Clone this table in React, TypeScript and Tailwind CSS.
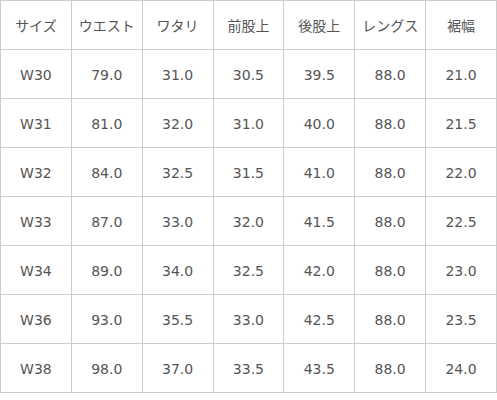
const headers = ['サイズ', 'ウエスト', 'ワタリ', '前股上', '後股上', 'レングス', '裾幅']

const rows = [
  ['W30', '79.0', '31.0', '30.5', '39.5', '88.0', '21.0'],
  ['W31', '81.0', '32.0', '31.0', '40.0', '88.0', '21.5'],
  ['W32', '84.0', '32.5', '31.5', '41.0', '88.0', '22.0'],
  ['W33', '87.0', '33.0', '32.0', '41.5', '88.0', '22.5'],
  ['W34', '89.0', '34.0', '32.5', '42.0', '88.0', '23.0'],
  ['W36', '93.0', '35.5', '33.0', '42.5', '88.0', '23.5'],
  ['W38', '98.0', '37.0', '33.5', '43.5', '88.0', '24.0'],
]

export default function App() {
  return (
    <div className="bg-white">
      <table className="w-[497px] table-fixed border-collapse text-[14px] text-[#555] [font-family:'DejaVu_Sans','Noto_Sans_CJK_JP',sans-serif]">
        <thead>
          <tr className="h-[49px]">
            {headers.map((h) => (
              <th key={h} className="border border-[#ccc] p-0 pt-[3px] text-center font-normal">
                {h}
              </th>
            ))}
          </tr>
        </thead>
        <tbody>
          {rows.map((row) => (
            <tr key={row[0]} className="h-[49px]">
              {row.map((cell, i) => (
                <td key={i} className="border border-[#ccc] p-0 pt-[3px] text-center">
                  {cell}
                </td>
              ))}
            </tr>
          ))}
        </tbody>
      </table>
    </div>
  )
}
